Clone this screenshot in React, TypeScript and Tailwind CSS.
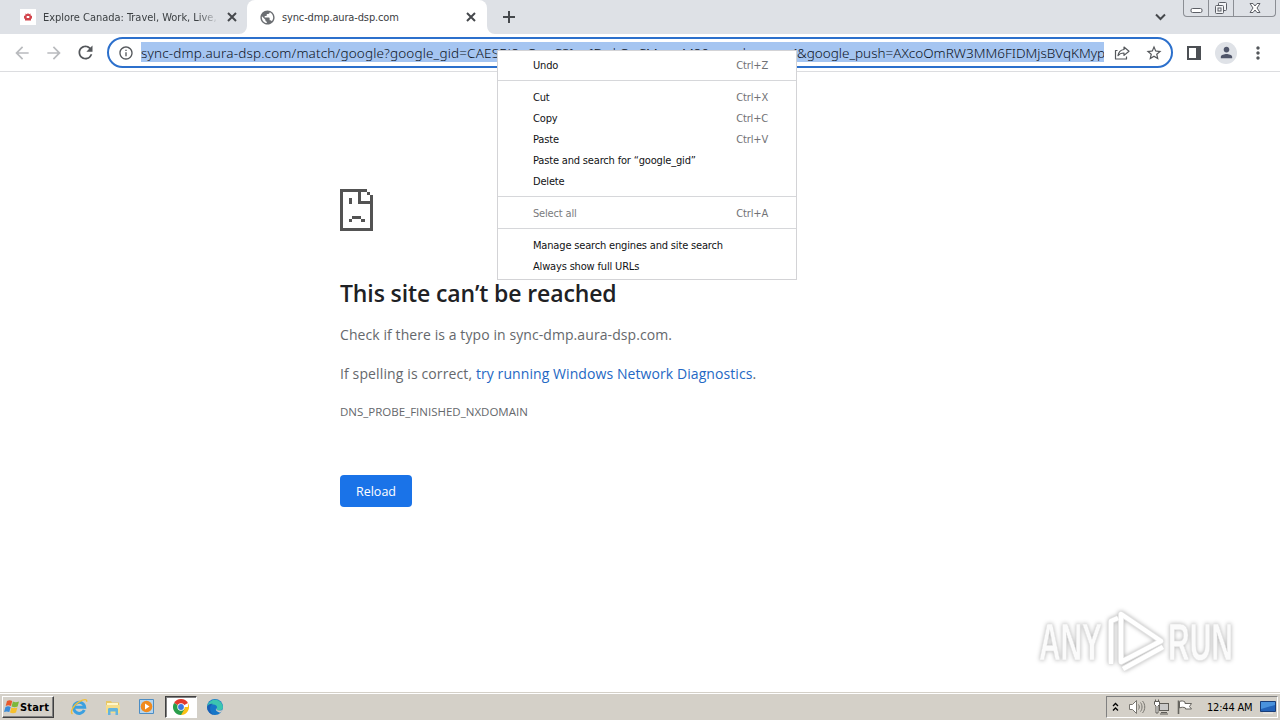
import type { ReactNode } from "react";
import clsx from "clsx";
import {
  MdArrowBack,
  MdArrowForward,
  MdInfoOutline,
  MdMoreVert,
  MdPerson,
  MdPublic,
  MdRefresh,
  MdStarBorder,
} from "react-icons/md";

const urlHost = "sync-dmp.aura-dsp.com/match/google?google_gid=CAESEJ8";
const urlGid = "uQwvCSIuuIDwkQuCMwvuM8&google_cver=1";
const urlPush = "&google_push=AXcoOmRW3MM6FIDMjsBVqKMyp";

interface MenuEntry {
  label: string;
  shortcut?: string;
  disabled?: boolean;
}

const menuGroups: MenuEntry[][] = [
  [{ label: "Undo", shortcut: "Ctrl+Z" }],
  [
    { label: "Cut", shortcut: "Ctrl+X" },
    { label: "Copy", shortcut: "Ctrl+C" },
    { label: "Paste", shortcut: "Ctrl+V" },
    { label: "Paste and search for “google_gid”" },
    { label: "Delete" },
  ],
  [{ label: "Select all", shortcut: "Ctrl+A", disabled: true }],
  [
    { label: "Manage search engines and site search" },
    { label: "Always show full URLs" },
  ],
];

function TabFlare({ side }: { side: "left" | "right" }) {
  return (
    <svg
      viewBox="0 0 8 8"
      className={clsx(
        "absolute bottom-0 w-2 h-2 fill-white",
        side === "left" ? "-left-2" : "-right-2 -scale-x-100"
      )}
    >
      <path d="M8 0v8H0a8 8 0 0 0 8-8z" />
    </svg>
  );
}

function CloseIcon({ className }: { className?: string }) {
  return (
    <svg width="10" height="10" className={className} stroke="#45484c" strokeWidth="2">
      <path d="M1 1l8 8M9 1L1 9" />
    </svg>
  );
}

function WindowControls() {
  return (
    <div className="flex w-[93px] h-[17px] mr-[4px] border border-t-0 border-[#8b8e94] rounded-b-[4px] text-[#5c5f66]">
      <div className="w-[25px] border-r border-[#8b8e94] flex justify-center">
        <svg width="13" height="16" fill="#fff" stroke="currentColor">
          <rect x="1" y="8.500" width="11" height="4" rx="1.500" />
        </svg>
      </div>
      <div className="w-[25px] border-r border-[#8b8e94] flex justify-center">
        <svg width="14" height="16" fill="#f3f4f6" stroke="currentColor">
          <rect x="4.500" y="2.500" width="8" height="8" rx="1" />
          <rect x="1.500" y="5.500" width="8" height="8" rx="1" />
          <rect x="4" y="8" width="3" height="3" />
        </svg>
      </div>
      <div className="flex-1 flex justify-center">
        <svg width="14" height="16" fill="#fff" stroke="currentColor" strokeLinejoin="round">
          <path d="M2 3.500h3l2 2.500 2-2.500h3L9 8l3 4.500H9L7 10l-2 2.500H2L5 8z" />
        </svg>
      </div>
    </div>
  );
}

function TabStrip() {
  return (
    <div className="h-[34px] bg-[#dee1e6] flex font-['DejaVu_Sans_Condensed',sans-serif] text-[11px] text-[#3c4043]">
      <div className="w-[247px] flex items-center pl-5">
        <div className="w-4 h-4 bg-white flex items-center justify-center">
          <svg width="10" height="10" viewBox="0 0 10 10">
            <path
              d="M5 1l1 1.300L7.600 1.500l-.1 1.700L9 4v2.300l-1 .7v1.500H2V7l-1-.7V4l1.500-.8-.1-1.700L4 2.300zM3.700 4v2h2.600V4z"
              fill="#d2444c"
              fillRule="evenodd"
            />
          </svg>
        </div>
        <div className="w-[176px] ml-[7px] mt-[2px] whitespace-nowrap overflow-hidden tracking-[-0.03px] [mask-image:linear-gradient(to_right,#000_88%,transparent_100%)]">
          Explore Canada: Travel, Work, Live,
        </div>
        <CloseIcon className="ml-[8px]" />
      </div>
      <div className="relative w-[240px] bg-white rounded-t-lg flex items-center pl-3">
        <TabFlare side="left" />
        <MdPublic className="w-[17px] h-[17px] text-[#6b6e72]" />
        <span className="ml-[6px] mt-[2px] tracking-[-0.14px]">sync-dmp.aura-dsp.com</span>
        <CloseIcon className="ml-auto mr-[11px]" />
        <TabFlare side="right" />
      </div>
      <div className="flex items-center ml-[16px]">
        <svg width="12" height="12" stroke="#45484c" strokeWidth="2">
          <path d="M6 0v12M0 6h12" />
        </svg>
      </div>
      <div className="flex items-center ml-auto mr-[17px]">
        <svg width="11" height="8" fill="none" stroke="#45484c" strokeWidth="2">
          <path d="M1 1.500l4.500 4.500L10 1.500" />
        </svg>
      </div>
      <WindowControls />
    </div>
  );
}

function Toolbar() {
  return (
    <div className="h-[38px] bg-white border-b border-[#dcdde0] flex items-center text-[#54575b]">
      <MdArrowBack className="w-5 h-5 ml-3 text-[#b9bbbe]" />
      <MdArrowForward className="w-5 h-5 ml-3 text-[#b9bbbe]" />
      <MdRefresh className="w-[21px] h-[21px] ml-[11px]" />
      <div className="w-[1066px] h-[31px] ml-[11px] border-2 border-[#2c70cc] rounded-full flex items-center">
        <MdInfoOutline className="w-4 h-4 ml-[9px]" />
        <div className="w-[963px] h-5 ml-[7px] mb-px pt-px bg-[#a5c5f1] overflow-hidden flex items-center whitespace-nowrap font-['Noto_Sans',sans-serif] font-light text-[13.500px] text-[#0d1424] leading-5">
          <div className="w-[656px] shrink-0 flex overflow-hidden">
            <span className="tracking-[0.16px]">{urlHost}</span>
            <span className="tracking-[-0.06px]">{urlGid}</span>
          </div>
          <span>{urlPush}</span>
        </div>
        <svg className="ml-[10px]" width="16" height="16" fill="none" stroke="currentColor" strokeWidth="1.200" strokeLinejoin="round">
          <path d="M3.500 5.500h-2v8.500h11v-2.500" />
          <path d="M10 2l5 4.200-5 4.200V8c-2.800 0-4.600.8-6 2.700.5-3.400 2.500-5.700 6-6.200z" />
        </svg>
        <MdStarBorder className="w-[18px] h-[18px] ml-[15px]" />
      </div>
      <div className="w-[14px] h-[14px] ml-[14px] border-2 border-r-[5px] border-[#4c4f54]" />
      <div className="w-[22px] h-[22px] ml-[14px] rounded-full bg-[#dfe2e7] flex items-center justify-center text-[#50566a]">
        <MdPerson className="w-[17px] h-[17px]" />
      </div>
      <MdMoreVert className="w-5 h-5 ml-[11px]" />
    </div>
  );
}

function ContextMenu() {
  return (
    <div className="absolute left-[497px] top-[50px] w-[300px] h-[230px] bg-white border border-[#d3d3d6] pt-[5px] font-['DejaVu_Sans_Condensed',sans-serif] text-[11px] tracking-[-0.17px] text-[#111214]">
      {menuGroups.map((group, i) => (
        <div key={i} className={clsx(i > 0 && "mt-[3px] pt-[7px] border-t border-[#d6d7da]")}>
          {group.map((entry) => (
            <div
              key={entry.label}
              className={clsx(
                "h-[21px] pl-[35px] pr-[28px] flex items-center justify-between",
                entry.disabled && "text-[#7a7b7d]"
              )}
            >
              <span>{entry.label}</span>
              <span className="text-[#717275]">{entry.shortcut}</span>
            </div>
          ))}
        </div>
      ))}
    </div>
  );
}

function SadPage() {
  return (
    <svg width="33" height="42" viewBox="0 0 33 42" fill="#535353" shapeRendering="crispEdges">
      <path d="M0 0h27v3H3v36h27V15H18V3h3v9h12v30H0z" />
      <path d="M27 3h3v3h-3zM30 6h3v6h-3zM9 9h3v6H9zM12 27h9v3h-9zM9 30h3v3H9zM21 30h4v3h-4z" />
    </svg>
  );
}

function ErrorPage() {
  return (
    <main className="flex-1 pl-[340px] pt-[117px] font-['Open_Sans',sans-serif] text-[14px] text-[#65686c]">
      <SadPage />
      <h1 className="mt-[47px] h-[30px] leading-[30px] text-[23px] font-semibold tracking-[-0.12px] text-[#202124]">
        This site can’t be reached
      </h1>
      <p className="mt-[17px] leading-5 tracking-[0.08px]">
        Check if there is a typo in sync-dmp.aura-dsp.com.
      </p>
      <p className="mt-[19px] leading-5 tracking-[0.12px]">
        If spelling is correct,{" "}
        <a className="text-[#2468c4] tracking-[0.08px]">try running Windows Network Diagnostics</a>.
      </p>
      <p className="mt-[18px] leading-5 text-[11.500px]">DNS_PROBE_FINISHED_NXDOMAIN</p>
      <button className="mt-[53px] block w-[72px] h-8 pt-[2px] rounded-[4px] bg-[#1a73e8] text-white text-[12.500px]">
        Reload
      </button>
    </main>
  );
}

function Watermark() {
  return (
    <svg
      className="absolute left-[1030px] top-[602px] overflow-visible drop-shadow-[0_0_2px_rgba(0,0,0,0.3)]"
      width="212"
      height="76"
    >
      <g
        fontFamily="Liberation Sans"
        fontSize="52"
        fontWeight="bold"
        fill="#fbfbfb"
        stroke="#e4e4e4"
        strokeWidth="0.600"
      >
        <text x="9" y="58" textLength="63" lengthAdjust="spacingAndGlyphs">ANY</text>
        <text x="138" y="58" textLength="65" lengthAdjust="spacingAndGlyphs">RUN</text>
      </g>
      <g fill="none" stroke="#e2e2e2" strokeWidth="6" strokeLinejoin="round">
        <path d="M81 62V19l7-3" />
        <path d="M91 12v48l40-21z" />
        <path d="M93 67l40-22" />
      </g>
      <g fill="none" stroke="#fff" strokeWidth="4.500" strokeLinejoin="round">
        <path d="M81 62V19l7-3" />
        <path d="M91 12v48l40-21z" />
        <path d="M93 67l40-22" />
      </g>
    </svg>
  );
}

function StartButton() {
  return (
    <div className="w-[52px] h-[22px] border border-t-white border-l-white border-r-[#404040] border-b-[#404040] shadow-[inset_-1px_-1px_0_#808080] flex items-center pl-px">
      <svg width="16" height="16" viewBox="0 0 16 16">
        <path d="M3 2c2-1 3.500-.8 5.200 0L7 7c-1.900-.8-3.500-.9-5.300 0z" fill="#e8592b" />
        <path d="M8.900 2.500c1.900.9 3.700.9 6.100 0l-1.400 5c-2.100.9-4 .8-6 0z" fill="#7cb83a" />
        <path d="M1.500 7.900c2-1 3.400-.8 5.200 0l-1.400 5.200c-1.800-.8-3.400-.9-5.300 0z" fill="#3a8bd8" />
        <path d="M7.400 8.400c1.900.9 3.900.9 6 0L12 13.500c-2.100.9-4 .8-6 0z" fill="#f6c02d" />
      </svg>
      <span className="mt-[2px] text-[11px] font-bold tracking-[0.18px]">Start</span>
    </div>
  );
}

function TaskSlot({ active, children }: { active?: boolean; children: ReactNode }) {
  return (
    <div
      className={clsx(
        "w-8 h-[22px] mr-[2px] flex items-center justify-center",
        active && "bg-white border border-t-[#404040] border-l-[#404040] border-r-white border-b-white shadow-[inset_1px_1px_0_#808080]"
      )}
    >
      {children}
    </div>
  );
}

function Taskbar() {
  return (
    <footer className="h-7 shrink-0 bg-[#d4d0c8] border-t border-[#d4d0c8] font-['DejaVu_Sans_Condensed',sans-serif] text-black">
      <div className="h-[27px] border-t border-white flex items-center pl-[2px] pr-[2px]">
        <StartButton />
        <div className="flex ml-[9px]">
          <TaskSlot>
            <svg width="18" height="18" viewBox="0 0 18 18" fill="none">
              <path d="M14.300 12A5.500 5.500 0 1 1 14.700 9.300H5" stroke="#3ba0e0" strokeWidth="3" />
              <path d="M2.500 16C-.5 14 4 6.500 9 3.800s8.500-3 7.500 0" stroke="#f0bf3a" strokeWidth="1.400" />
            </svg>
          </TaskSlot>
          <TaskSlot>
            <svg width="18" height="18" viewBox="0 0 18 18">
              <path d="M2 3h5l1 1.500h7V14H2z" fill="#e8c765" />
              <path d="M3 5h11v4H3z" fill="#fff6c8" />
              <path d="M2 7h14v8H2z" fill="#f5dd8b" />
              <path d="M4 17v-5.500c0-1 .5-1.500 1.500-1.500h7c1 0 1.500.5 1.500 1.500V17h-2.500v-3.500h-5V17z" fill="#63b4dd" />
            </svg>
          </TaskSlot>
          <TaskSlot>
            <svg width="18" height="18" viewBox="0 0 18 18">
              <path d="M1.500 1.500h14v14h-14z" fill="#b5d5ee" stroke="#4c8dc4" />
              <circle cx="8.500" cy="8.500" r="5.800" fill="#f08a1d" />
              <path d="M7 5.500l4.500 3-4.500 3z" fill="#fff" />
            </svg>
          </TaskSlot>
          <TaskSlot active>
            <svg width="16" height="16" viewBox="0 0 16 16">
              <path d="M8 8L1.070 4A8 8 0 0 1 14.930 4z" fill="#e33b2e" />
              <path d="M8 8h6.930V4A8 8 0 0 1 8 16z" fill="#fbc116" />
              <path d="M8 8l3.500 2L8 16A8 8 0 0 1 1.070 4z" fill="#2a9e4b" />
              <circle cx="8" cy="8" r="3.700" fill="#fff" />
              <circle cx="8" cy="8" r="2.900" fill="#3b78e0" />
            </svg>
          </TaskSlot>
          <TaskSlot>
            <svg width="16" height="16" viewBox="0 0 16 16">
              <circle cx="8" cy="8" r="8" fill="#1677c8" />
              <path d="M.5 6A8 8 0 0 1 16 8c0 2.500-2 3.500-4.500 3.500C9 11.500 9.500 10 10 9c.5-1.500-1-3.500-3.500-3.500S2 6 .5 8z" fill="#3cc6b0" />
              <path d="M0 8c1-3 4-3.500 6-3-3 1-3.500 4-2.500 7s4 4 5 4A8 8 0 0 1 0 8z" fill="#1b5fb4" />
              <path d="M9.500 8.500c-.8 1.500 0 3 2.500 3s3.500-.5 4-1c-.5 1-1.500 2.500-2.500 3-3 0-6-2.500-4-5z" fill="#d4d0c8" />
            </svg>
          </TaskSlot>
        </div>
        <div className="ml-auto w-[172px] h-[22px] border border-t-[#808080] border-l-[#808080] border-r-white border-b-white flex items-center pl-[5px]">
          <svg width="7" height="10" fill="none" stroke="#000" strokeWidth="1.300">
            <path d="M1 4l2.500-2.500L6 4M1 8.500L3.500 6 6 8.500" />
          </svg>
          <svg className="ml-[9px]" width="18" height="16" fill="#fff" stroke="#77756f">
            <path d="M1.500 5.500h3l4-4v13l-4-4h-3z" />
            <path d="M10.500 5.500c1 1.500 1 3.500 0 5M12.500 3.500c2 2.500 2 6.500 0 9M14.500 2c3 3.500 3 8.500 0 12" fill="none" />
          </svg>
          <svg className="ml-[7px]" width="17" height="16" fill="#fff" stroke="#5e5c57">
            <rect x="6.500" y="4.500" width="9" height="7" fill="#c9c9c9" />
            <path d="M8 13.500h6M7 15h8" />
            <path d="M1.500 2.500h5v3l-1.500 1.500v7H3V7L1.500 5.500zM2.500.5v2M5.500.5v2" />
          </svg>
          <svg className="ml-[6px]" width="18" height="16" fill="#fff" stroke="#66645f">
            <path d="M2.500 15V1.500" strokeWidth="1.600" />
            <path d="M3.500 2.500c2-1 4-.5 5.500.5v1.500h6.500l-2 3 2 2.500H9.500V9c-2-1-4-1-6 0z" />
          </svg>
          <span className="ml-[13px] mt-[2px] text-[11px] tracking-[-0.19px] whitespace-nowrap">12:44 AM</span>
          <svg className="ml-auto mr-px shrink-0" width="16" height="14">
            <path d="M.5 1.500h15v10H.5z" fill="#2463b8" stroke="#193d78" />
            <path d="M1 2h14v3L1 9z" fill="#4a92dc" />
            <path d="M3 12.500h10v1H3z" fill="#eee" />
          </svg>
        </div>
      </div>
    </footer>
  );
}

export default function App() {
  return (
    <div className="relative w-[1280px] h-[720px] overflow-hidden bg-white flex flex-col">
      <TabStrip />
      <Toolbar />
      <ErrorPage />
      <Taskbar />
      <Watermark />
      <ContextMenu />
    </div>
  );
}
